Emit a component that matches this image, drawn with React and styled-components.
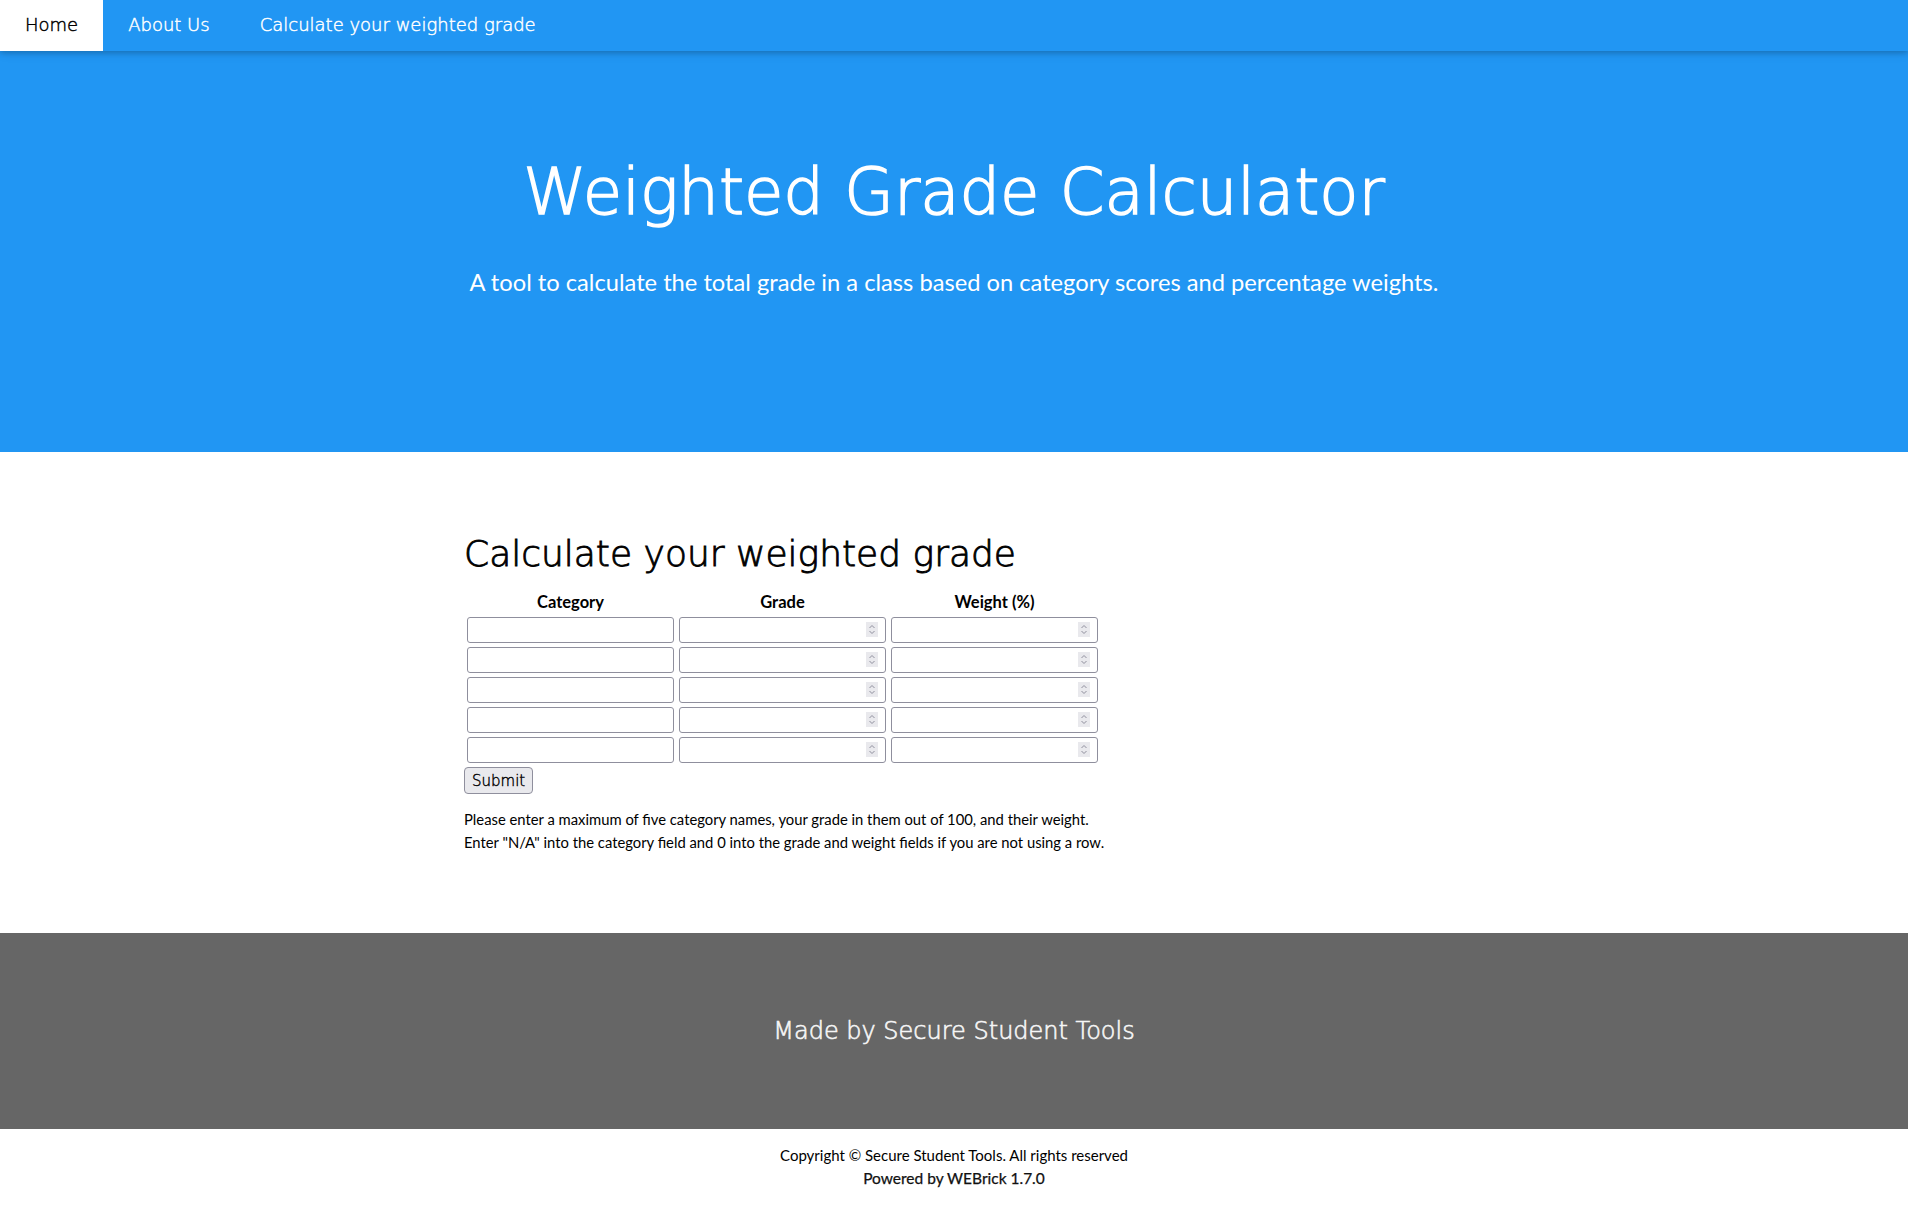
import styled, { createGlobalStyle } from "styled-components";

const GlobalStyle = createGlobalStyle`
    html, body {
        margin: 0;
        padding: 0;
    }

    body {
        font-family: Lato, "Liberation Sans", sans-serif;
        font-size: 15px;
        line-height: 1.5;
        color: #000;
        background: #fff;
    }
`

const StyledNav = styled.nav`
    display: flex;
    height: 51px;
    background-color: #2196f3;
    box-shadow: 0 2px 5px 0 rgba(0,0,0,0.16), 0 2px 10px 0 rgba(0,0,0,0.12);
    position: relative;
    z-index: 1;
`

const NavItem = styled.a`
    display: flex;
    align-items: center;
    padding: 0 25px 2px;
    font-family: "DejaVu Sans", sans-serif;
    font-weight: 200;
    -webkit-text-stroke: 0.45px currentColor;
    font-size: 18px;
    text-decoration: none;
    color: ${props => props.$active ? "#000" : "#fff"};
    background-color: ${props => props.$active ? "#fff" : "transparent"};
    cursor: pointer;
`

const StyledHeader = styled.header`
    background-color: #2196f3;
    color: #fff;
    text-align: center;
    height: 401px;
    padding-top: 103px;
    box-sizing: border-box;

    h1 {
        margin: 0;
        font-family: "DejaVu Sans", sans-serif;
        font-weight: 200;
        -webkit-text-stroke: 1.5px currentColor;
        font-size: 64px;
        line-height: 77px;
    }

    p {
        margin: 33px 0 0;
        font-size: 23.7px;
        line-height: 36px;
    }
`

const StyledMain = styled.section`
    padding: 80px 16px 79px;
`

const Content = styled.div`
    max-width: 980px;
    margin: 0 auto;

    h2 {
        margin: 0 0 16px;
        font-family: "DejaVu Sans", sans-serif;
        font-weight: 200;
        -webkit-text-stroke: 0.85px currentColor;
        font-size: 36px;
        line-height: 43px;
    }

    p {
        margin: 14px 0 0;
        font-size: 14.8px;
        line-height: 23px;
    }
`

const GradeGrid = styled.div`
    display: grid;
    grid-template-columns: repeat(3, 207px);
    column-gap: 5px;
    row-gap: 4px;
    padding-left: 3px;
`

const ColumnLabel = styled.div`
    text-align: center;
    font-weight: 700;
    font-size: 16.5px;
    line-height: 22px;
`

const Field = styled.div`
    position: relative;
    height: 26px;
`

const StyledInput = styled.input`
    box-sizing: border-box;
    width: 100%;
    height: 100%;
    margin: 0;
    padding: 2px 4px;
    border: 1px solid #8f8f9d;
    border-radius: 3px;
    font-family: Lato, sans-serif;
    font-size: 15px;
    background: #fff;
    appearance: textfield;

    &::-webkit-inner-spin-button,
    &::-webkit-outer-spin-button {
        -webkit-appearance: none;
        margin: 0;
    }
`

const Spinner = styled.span`
    position: absolute;
    right: 8px;
    top: 5px;
    width: 12px;
    height: 15px;
    background: #e9e9ed;
    display: flex;
    align-items: center;
    justify-content: center;
    pointer-events: none;
`

const SubmitButton = styled.button`
    display: block;
    margin-top: 4px;
    height: 27px;
    padding: 0 7px;
    font-family: "DejaVu Sans", sans-serif;
    font-weight: 200;
    -webkit-text-stroke: 0.4px currentColor;
    font-size: 15px;
    color: #000;
    background: #e9e9ed;
    border: 1px solid #8f8f9d;
    border-radius: 4px;
`

const StyledFooter = styled.footer`
    background-color: #666;
    color: #f6f6f6;
    height: 196px;
    display: flex;
    align-items: center;
    justify-content: center;
    font-family: "DejaVu Sans", sans-serif;
    font-weight: 200;
    -webkit-text-stroke: 0.6px currentColor;
    font-size: 24px;
`

const StyledCopyright = styled.div`
    text-align: center;
    padding: 15px 0 15px;
    font-size: 15px;
    line-height: 23px;

    address {
        font-style: normal;
        font-size: 15.5px;
        color: #111;
        -webkit-text-stroke: 0.25px #111;
    }
`

function SpinIcon() {
    return (
        <Spinner>
            <svg width="8" height="13" viewBox="0 0 8 13" fill="none" stroke="#8f8f9d" strokeWidth="1">
                <path d="M1.5 5 L4 2.5 L6.5 5" />
                <path d="M1.5 8 L4 10.5 L6.5 8" />
            </svg>
        </Spinner>
    )
}

const rows = [0, 1, 2, 3, 4]

export default function App() {
    return (
        <>
            <GlobalStyle />
            <StyledNav>
                <NavItem $active>Home</NavItem>
                <NavItem>About Us</NavItem>
                <NavItem>Calculate your weighted grade</NavItem>
            </StyledNav>

            <StyledHeader>
                <h1>Weighted Grade Calculator</h1>
                <p>A tool to calculate the total grade in a class based on category scores and percentage weights.</p>
            </StyledHeader>

            <StyledMain>
                <Content>
                    <h2>Calculate your weighted grade</h2>
                    <form onSubmit={e => e.preventDefault()}>
                        <GradeGrid>
                            <ColumnLabel>Category</ColumnLabel>
                            <ColumnLabel>Grade</ColumnLabel>
                            <ColumnLabel>Weight (%)</ColumnLabel>
                            {rows.map(i => [
                                <Field key={"c" + i}>
                                    <StyledInput type="text" />
                                </Field>,
                                <Field key={"g" + i}>
                                    <StyledInput type="number" />
                                    <SpinIcon />
                                </Field>,
                                <Field key={"w" + i}>
                                    <StyledInput type="number" />
                                    <SpinIcon />
                                </Field>
                            ])}
                        </GradeGrid>
                        <SubmitButton type="submit">Submit</SubmitButton>
                    </form>
                    <p>
                        Please enter a maximum of five category names, your grade in them out of 100, and their weight.
                        <br />
                        Enter "N/A" into the category field and 0 into the grade and weight fields if you are not using a row.
                    </p>
                </Content>
            </StyledMain>

            <StyledFooter>Made by Secure Student Tools</StyledFooter>

            <StyledCopyright>
                Copyright © Secure Student Tools. All rights reserved
                <address>Powered by WEBrick 1.7.0</address>
            </StyledCopyright>
        </>
    )
}
